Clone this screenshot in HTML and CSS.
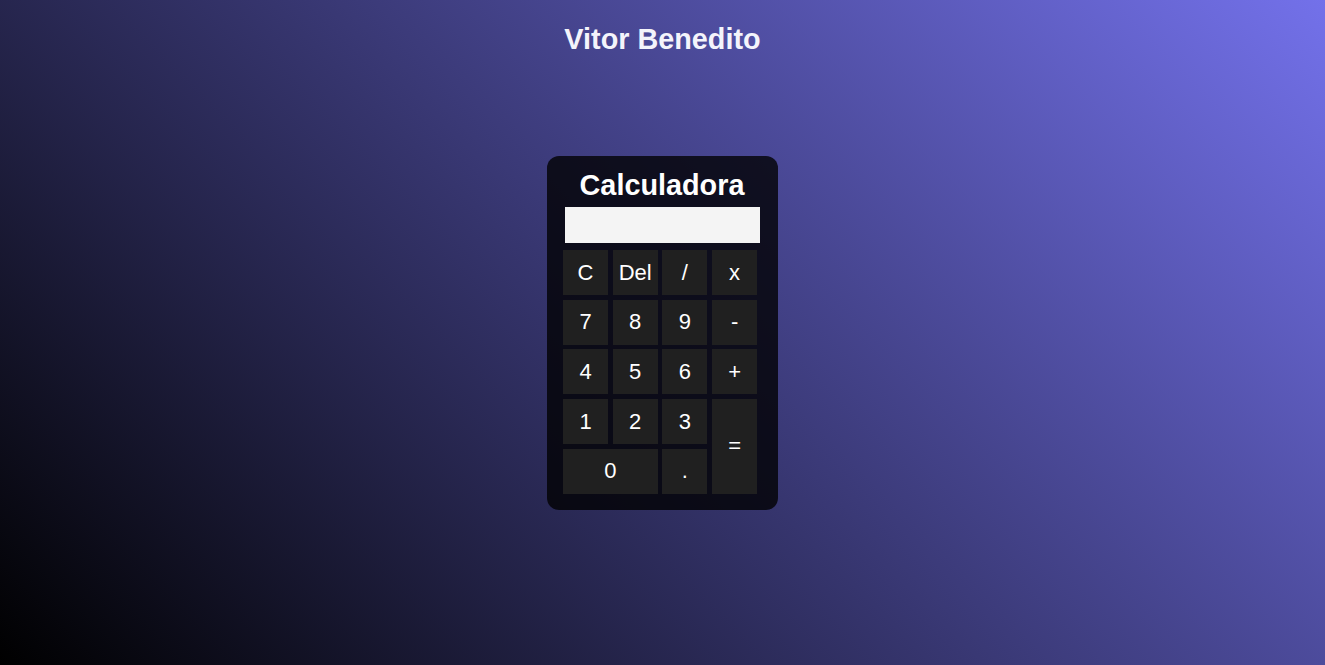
FILE: index.html
```html
<!DOCTYPE html>
<html lang="pt">
<head>
<meta charset="utf-8">
<title>Calculadora</title>
<link rel="stylesheet" href="styles.css">
</head>
<body>
<h1 class="author">Vitor Benedito</h1>
<main class="calculator">
  <h2 class="calc-title">Calculadora</h2>
  <div class="display"></div>
  <div class="keys">
    <button class="key">C</button>
    <button class="key">Del</button>
    <button class="key">/</button>
    <button class="key">x</button>
    <button class="key">7</button>
    <button class="key">8</button>
    <button class="key">9</button>
    <button class="key">-</button>
    <button class="key">4</button>
    <button class="key">5</button>
    <button class="key">6</button>
    <button class="key">+</button>
    <button class="key">1</button>
    <button class="key">2</button>
    <button class="key">3</button>
    <button class="key key-equals">=</button>
    <button class="key key-zero">0</button>
    <button class="key">.</button>
  </div>
</main>
</body>
</html>
```

FILE: styles.css
```css
html, body {
  margin: 0;
  padding: 0;
}

body {
  min-height: 100vh;
  background: linear-gradient(45deg, #000000, #7371ea);
  font-family: "Liberation Sans", Arial, sans-serif;
  color: #fff;
  display: flex;
  flex-direction: column;
  align-items: center;
}

.author {
  margin: 23px 0 0;
  font-size: 28.8px;
  font-weight: bold;
  line-height: 32px;
  color: #f4f4fb;
}

.calculator {
  margin-top: 101px;
  width: 231px;
  box-sizing: border-box;
  padding: 13px 21px 16px 16px;
  background: rgba(0, 0, 0, 0.78);
  border-radius: 12px;
  display: flex;
  flex-direction: column;
}

.calc-title {
  margin: 0 -4px 0 0;
  text-align: center;
  font-size: 28.8px;
  line-height: 32px;
  font-weight: bold;
  color: #fff;
}

.display {
  margin: 6px 0 0 2px;
  width: 195px;
  height: 36px;
  background: #f4f4f4;
}

.keys {
  margin-top: 7px;
  display: grid;
  grid-template-columns: repeat(4, 45px);
  grid-auto-rows: 45px;
  gap: 4.7px;
}

.key {
  border: none;
  margin: 0;
  padding: 0;
  background: #202020;
  color: #fff;
  font-family: "Liberation Sans", Arial, sans-serif;
  font-size: 22px;
}

.key-equals {
  grid-column: 4;
  grid-row: 4 / span 2;
}

.key-zero {
  grid-column: 1 / span 2;
}
```
